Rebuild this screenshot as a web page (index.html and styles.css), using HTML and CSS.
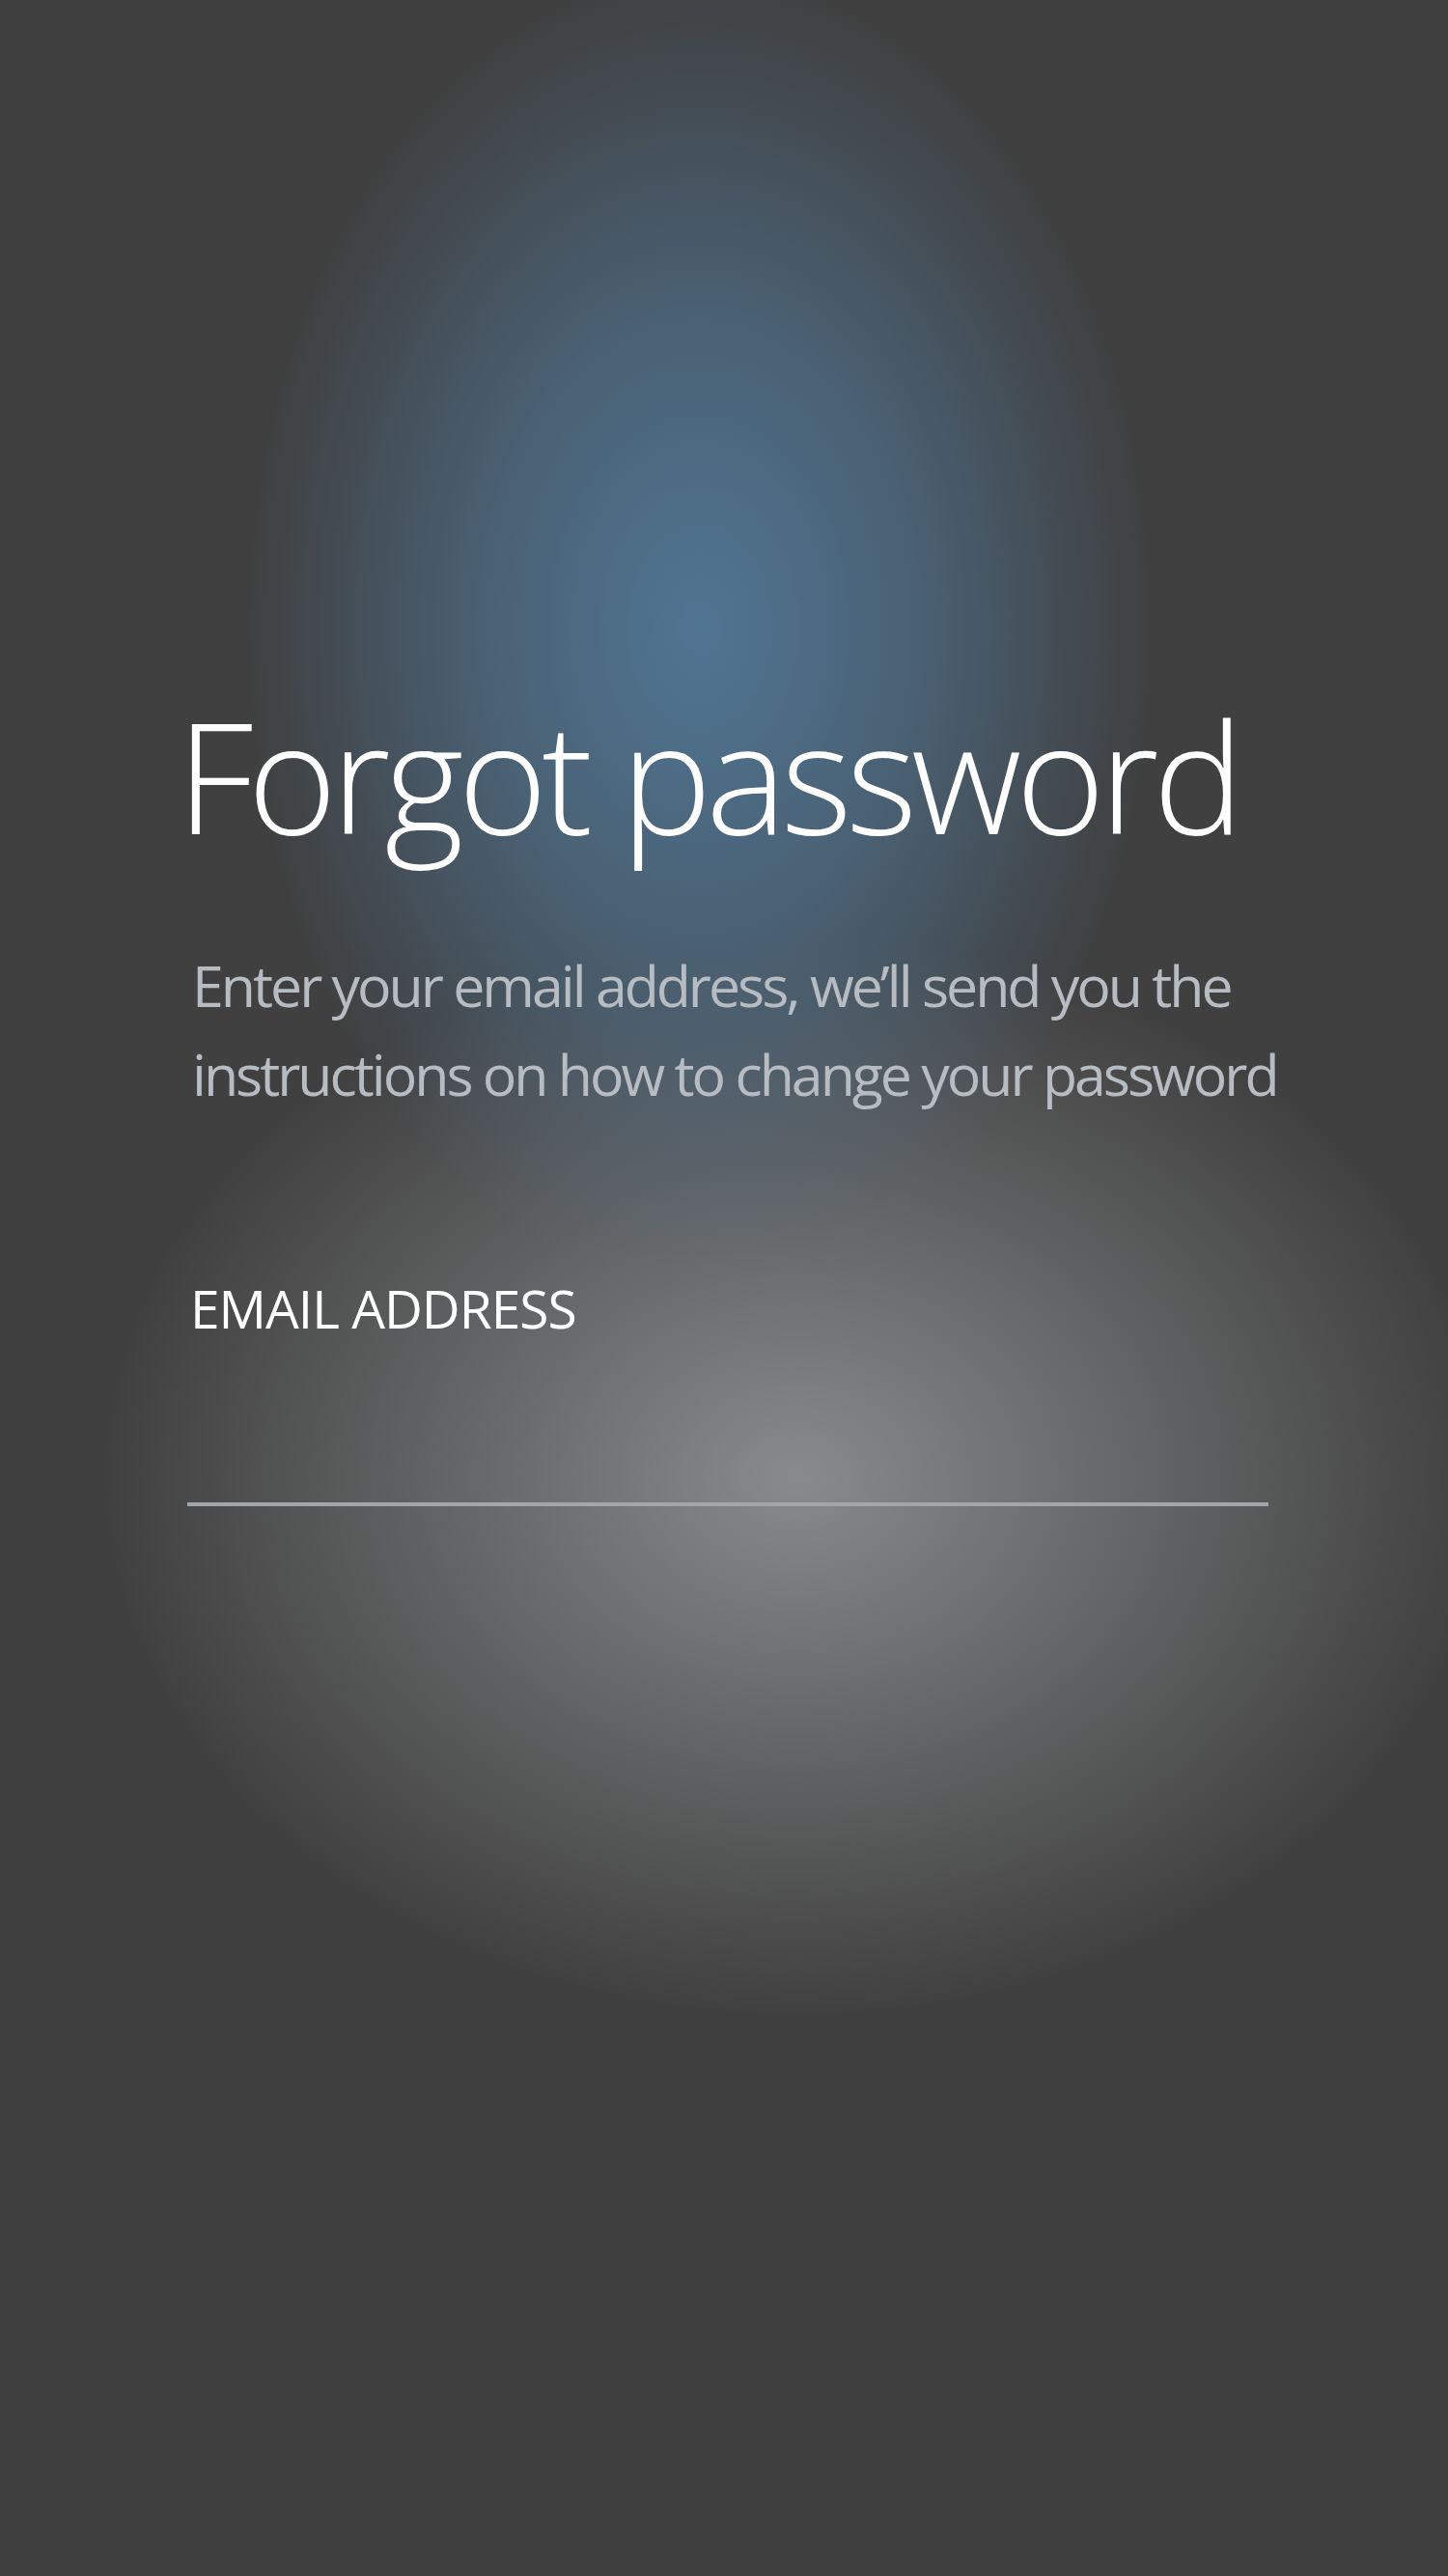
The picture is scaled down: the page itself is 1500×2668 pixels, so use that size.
FILE: index.html
```html
<!DOCTYPE html>
<html lang="en">
<head>
<meta charset="utf-8">
<title>Forgot password</title>
<link rel="stylesheet" href="styles.css">
</head>
<body>
<main class="screen">
  <section class="form">
    <h1 class="title">Forgot password</h1>
    <p class="intro">Enter your email address, we’ll send you the instructions on how to change your password</p>
    <label class="field">
      <span class="field-label">EMAIL ADDRESS</span>
      <input class="field-input" type="email" aria-label="Email address">
    </label>
  </section>
</main>
</body>
</html>
```

FILE: styles.css
```css
html, body {
  margin: 0;
  padding: 0;
}
body {
  width: 1500px;
  height: 2668px;
  overflow: hidden;
  font-family: "Open Sans", "Noto Sans", sans-serif;
  background:
    radial-gradient(ellipse 470px 680px at 725px 650px, rgba(80,117,147,1) 0%, rgba(80,117,147,0.62) 48%, rgba(80,117,147,0) 100%),
    radial-gradient(ellipse 720px 560px at 825px 1530px, rgba(136,138,140,1) 0%, rgba(136,138,140,0.55) 45%, rgba(136,138,140,0) 100%),
    #404040;
}
.screen {
  height: 100%;
  box-sizing: border-box;
  padding-top: 703px;
  padding-left: 194px;
}
.form {
  width: 1120px;
  display: flex;
  flex-direction: column;
}
.title {
  margin: 0 0 0 -11px;
  font-weight: 300;
  font-size: 158px;
  line-height: 200px;
  color: #ffffff;
  letter-spacing: -6px;
  white-space: nowrap;
}
.intro {
  margin: 0;
  padding-top: 71px;
  padding-left: 5px;
  font-weight: 400;
  font-size: 59px;
  line-height: 92px;
  color: #b7bcc2;
  letter-spacing: -3px;
  width: 1140px;
}
.field {
  display: flex;
  flex-direction: column;
  padding-top: 162px;
}
.field-label {
  padding-left: 3px;
  font-size: 55px;
  line-height: 70px;
  color: #ffffff;
  letter-spacing: -1px;
}
.field-input {
  box-sizing: border-box;
  margin: 0;
  height: 170px;
  background: transparent;
  border: 0;
  border-bottom: 4px solid #a3a6a9;
  padding: 0;
  outline: none;
  width: 1120px;
}
```
